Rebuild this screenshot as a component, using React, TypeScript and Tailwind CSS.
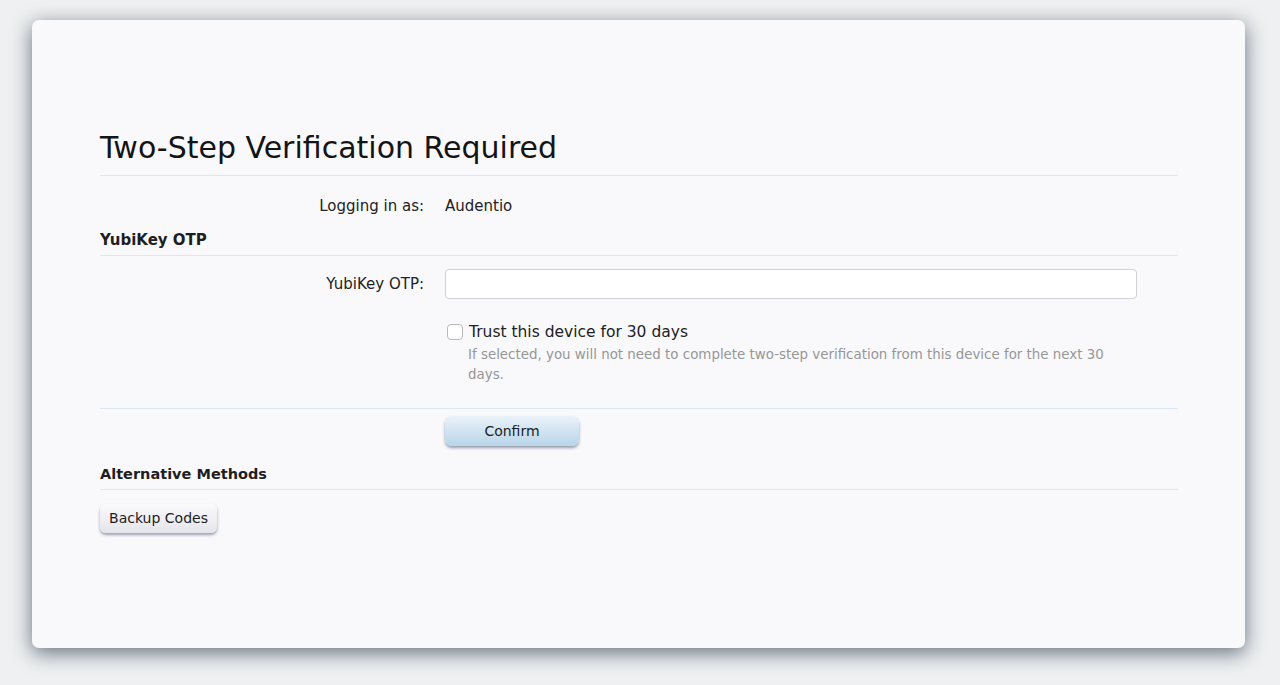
import { useState } from 'react';

const font = { fontFamily: '"DejaVu Sans", "Open Sans", sans-serif' };

export default function App() {
  const [trusted, setTrusted] = useState(false);

  return (
    <div className="min-h-[685px] w-full bg-[#eef0f1] pt-[20px] pl-[32px] pr-[35px]" style={font}>
      <div className="h-[628px] rounded-[7px] bg-[#f9f9fc] shadow-[0_5px_20px_rgba(30,45,65,0.65)] pl-[68px] pr-[67px] pt-[108px]">
        <h1 className="text-[30px] leading-[40px] text-[#141414] pb-[7px] border-b border-[#d8e8f5]">
          Two-Step Verification Required
        </h1>

        <div className="mt-[18px] flex items-center text-[15px] leading-[24px] text-[#222]">
          <div className="w-[324px] text-right">Logging in as:</div>
          <div className="ml-[21px]">Audentio</div>
        </div>

        <h3 className="mt-[10px] pb-[3px] border-b border-[#d8e8f5] text-[15px] leading-[24px] font-bold text-[#1e1e1e]">
          YubiKey OTP
        </h3>

        <div className="mt-[13px] flex items-center text-[15px] text-[#222]">
          <label className="w-[324px] text-right">YubiKey OTP:</label>
          <input
            type="text"
            className="ml-[21px] h-[30px] w-[692px] rounded-[4px] border border-[#d2d2d6] bg-white px-2 outline-none"
          />
        </div>

        <div className="ml-[345px] mt-[21px]">
          <label className="flex items-center gap-[6px] text-[15.5px] leading-[24px] text-[#222] cursor-pointer">
            <span
              onClick={() => setTrusted(!trusted)}
              className="inline-block h-[16px] w-[16px] rounded-[4px] border border-[#b8b8bc] bg-white ml-[2px]"
            />
            Trust this device for 30 days
          </label>
          <p className="ml-[23px] mt-[1px] w-[660px] text-[13.4px] leading-[20px] text-[#969696]">
            If selected, you will not need to complete two-step verification from this device for the next 30 days.
          </p>
        </div>

        <div className="mt-[23px] border-t border-[#d8e8f5] pt-[7px] pl-[345px]">
          <button className="h-[30px] w-[134px] rounded-[7px] bg-gradient-to-b from-[#eaf2f9] to-[#b9d5ea] text-[14px] text-[#1c1c1c] shadow-[0_2px_3px_rgba(60,80,100,0.55)]">
            Confirm
          </button>
        </div>

        <h3 className="mt-[16px] pb-[3px] border-b border-[#d8e8f5] text-[14.5px] leading-[24px] font-bold text-[#1e1e1e]">
          Alternative Methods
        </h3>

        <div className="mt-[14px]">
          <button className="h-[29px] w-[117px] rounded-[6px] bg-gradient-to-b from-[#fbfbfd] to-[#e4e4ec] text-[14px] text-[#1c1c1c] shadow-[0_2px_3px_rgba(60,70,90,0.5)]">
            Backup Codes
          </button>
        </div>
      </div>
    </div>
  );
}
